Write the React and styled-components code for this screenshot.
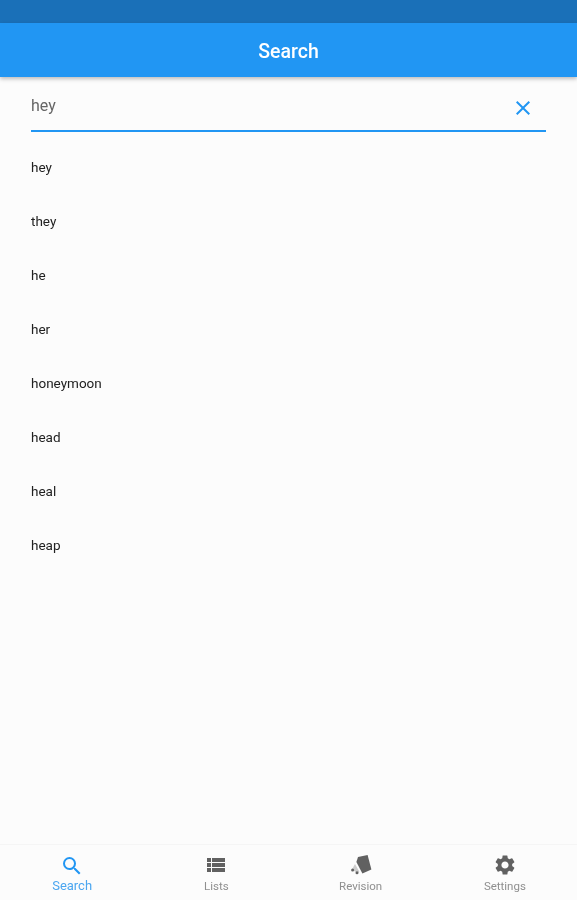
import React from "react";
import styled, { createGlobalStyle } from "styled-components";
import { MdSearch, MdClose, MdViewList, MdSettings } from "react-icons/md";

const words = ["hey", "they", "he", "her", "honeymoon", "head", "heal", "heap"];

const GlobalStyle = createGlobalStyle`
  html, body {
    margin: 0;
    padding: 0;
    background: #fcfcfc;
    font-family: Roboto, "Liberation Sans", sans-serif;
  }
`;

function RevisionIcon() {
  return (
    <svg width="24" height="24" viewBox="0 0 24 24" fill="#616161">
      <path d="M9 4 18.6 2 22.4 16.4 13.4 20.4 7.4 9z" />
      <path d="M6 11 10.4 18.8l-2.4 1-3.6-2.4-1-1.6z" opacity="0.3" />
      <circle cx="3.6" cy="17" r="1.5" />
      <circle cx="8" cy="19.8" r="1.5" />
    </svg>
  );
}

export default function App() {
  return (
    <>
      <GlobalStyle />
      <Screen>
        <StatusBar />
        <AppBar>Search</AppBar>
        <Content>
          <SearchField>
            <SearchText>hey</SearchText>
            <ClearIcon />
          </SearchField>
          <WordList>
            {words.map((word) => (
              <WordRow key={word}>{word}</WordRow>
            ))}
          </WordList>
        </Content>
        <BottomNav>
          <NavItem $active>
            <MdSearch size={24} />
            <NavLabel $active>Search</NavLabel>
          </NavItem>
          <NavItem>
            <MdViewList size={28} />
            <NavLabel>Lists</NavLabel>
          </NavItem>
          <NavItem>
            <RevisionIcon />
            <NavLabel>Revision</NavLabel>
          </NavItem>
          <NavItem>
            <MdSettings size={24} />
            <NavLabel>Settings</NavLabel>
          </NavItem>
        </BottomNav>
      </Screen>
    </>
  );
}

const Screen = styled.div`
  display: flex;
  flex-direction: column;
  height: 900px;
  overflow: hidden;
  background: #fcfcfc;
  filter: blur(0.4px);
`;
const StatusBar = styled.div`
  height: 23px;
  background: #1a70b8;
`;
const AppBar = styled.div`
  position: relative;
  height: 52px;
  padding-top: 2px;
  display: flex;
  align-items: center;
  justify-content: center;
  background: #2196f3;
  color: white;
  font-size: 19.5px;
  font-weight: 500;
  box-shadow: 0 2px 4px rgba(0, 0, 0, 0.25);
`;
const Content = styled.div`
  flex: 1;
  padding: 0 31px;
`;
const SearchField = styled.div`
  height: 53px;
  display: flex;
  align-items: center;
  justify-content: space-between;
  border-bottom: 2px solid #2196f3;
`;
const SearchText = styled.div`
  font-size: 16px;
  color: #666666;
  margin-top: 4px;
`;
const ClearIcon = styled(MdClose)`
  width: 24px;
  height: 24px;
  color: #2196f3;
  margin-right: 11px;
  margin-top: 8px;
`;
const WordList = styled.div`
  display: flex;
  flex-direction: column;
  padding-top: 8px;
`;
const WordRow = styled.div`
  height: 54px;
  display: flex;
  align-items: center;
  font-size: 13.5px;
  color: #212121;
`;
const BottomNav = styled.div`
  height: 55px;
  display: grid;
  grid-template-columns: repeat(4, 1fr);
  border-top: 1px solid #f5f5f5;
`;
const NavItem = styled.div`
  display: flex;
  flex-direction: column;
  align-items: center;
  justify-content: flex-end;
  padding-bottom: 7px;
  color: ${(props) => (props.$active ? "#2196f3" : "#616161")};
  svg {
    height: 24px;
    flex: none;
  }
`;
const NavLabel = styled.div`
  font-size: ${(props) => (props.$active ? "13px" : "11.5px")};
  line-height: 14px;
  margin-top: ${(props) => (props.$active ? "1px" : "2px")};
  color: ${(props) => (props.$active ? "#4ba6f0" : "#8f8f8f")};
`;
